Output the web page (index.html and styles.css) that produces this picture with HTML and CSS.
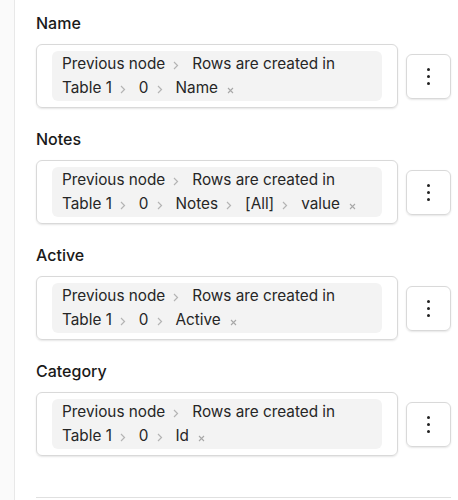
FILE: index.html
```html
<!DOCTYPE html>
<html lang="en">
<head>
<meta charset="UTF-8">
<title>Mapping fields</title>
<link rel="stylesheet" href="styles.css">
</head>
<body>
	<div class="sidebar"></div>
	<div class="main">
		<div class="field">
			<div class="label">Name</div>
			<div class="row">
				<div class="input">
					<div class="chip">Previous node<svg class="sep" width="6" height="9" viewBox="0 0 6 9"><path d="M1 1l3.5 3.5L1 8" fill="none" stroke="#b4b4b4" stroke-width="1.2"/></svg>Rows are created in Table 1<svg class="sep" width="6" height="9" viewBox="0 0 6 9"><path d="M1 1l3.5 3.5L1 8" fill="none" stroke="#b4b4b4" stroke-width="1.2"/></svg>0<svg class="sep" width="6" height="9" viewBox="0 0 6 9"><path d="M1 1l3.5 3.5L1 8" fill="none" stroke="#b4b4b4" stroke-width="1.2"/></svg>Name<svg class="del" width="7" height="7" viewBox="0 0 7 7"><path d="M1 1l5 5M6 1L1 6" stroke="#a8a8a8" stroke-width="1.1"/></svg></div>
				</div>
				<div class="more"><span></span><span></span><span></span></div>
			</div>
		</div>
		<div class="field">
			<div class="label">Notes</div>
			<div class="row">
				<div class="input">
					<div class="chip">Previous node<svg class="sep" width="6" height="9" viewBox="0 0 6 9"><path d="M1 1l3.5 3.5L1 8" fill="none" stroke="#b4b4b4" stroke-width="1.2"/></svg>Rows are created in Table 1<svg class="sep" width="6" height="9" viewBox="0 0 6 9"><path d="M1 1l3.5 3.5L1 8" fill="none" stroke="#b4b4b4" stroke-width="1.2"/></svg>0<svg class="sep" width="6" height="9" viewBox="0 0 6 9"><path d="M1 1l3.5 3.5L1 8" fill="none" stroke="#b4b4b4" stroke-width="1.2"/></svg>Notes<svg class="sep" width="6" height="9" viewBox="0 0 6 9"><path d="M1 1l3.5 3.5L1 8" fill="none" stroke="#b4b4b4" stroke-width="1.2"/></svg>[All]<svg class="sep" width="6" height="9" viewBox="0 0 6 9"><path d="M1 1l3.5 3.5L1 8" fill="none" stroke="#b4b4b4" stroke-width="1.2"/></svg>value<svg class="del" width="7" height="7" viewBox="0 0 7 7"><path d="M1 1l5 5M6 1L1 6" stroke="#a8a8a8" stroke-width="1.1"/></svg></div>
				</div>
				<div class="more"><span></span><span></span><span></span></div>
			</div>
		</div>
		<div class="field">
			<div class="label">Active</div>
			<div class="row">
				<div class="input">
					<div class="chip">Previous node<svg class="sep" width="6" height="9" viewBox="0 0 6 9"><path d="M1 1l3.5 3.5L1 8" fill="none" stroke="#b4b4b4" stroke-width="1.2"/></svg>Rows are created in Table 1<svg class="sep" width="6" height="9" viewBox="0 0 6 9"><path d="M1 1l3.5 3.5L1 8" fill="none" stroke="#b4b4b4" stroke-width="1.2"/></svg>0<svg class="sep" width="6" height="9" viewBox="0 0 6 9"><path d="M1 1l3.5 3.5L1 8" fill="none" stroke="#b4b4b4" stroke-width="1.2"/></svg>Active<svg class="del" width="7" height="7" viewBox="0 0 7 7"><path d="M1 1l5 5M6 1L1 6" stroke="#a8a8a8" stroke-width="1.1"/></svg></div>
				</div>
				<div class="more"><span></span><span></span><span></span></div>
			</div>
		</div>
		<div class="field">
			<div class="label">Category</div>
			<div class="row">
				<div class="input">
					<div class="chip">Previous node<svg class="sep" width="6" height="9" viewBox="0 0 6 9"><path d="M1 1l3.5 3.5L1 8" fill="none" stroke="#b4b4b4" stroke-width="1.2"/></svg>Rows are created in Table 1<svg class="sep" width="6" height="9" viewBox="0 0 6 9"><path d="M1 1l3.5 3.5L1 8" fill="none" stroke="#b4b4b4" stroke-width="1.2"/></svg>0<svg class="sep" width="6" height="9" viewBox="0 0 6 9"><path d="M1 1l3.5 3.5L1 8" fill="none" stroke="#b4b4b4" stroke-width="1.2"/></svg>Id<svg class="del" width="7" height="7" viewBox="0 0 7 7"><path d="M1 1l5 5M6 1L1 6" stroke="#a8a8a8" stroke-width="1.1"/></svg></div>
				</div>
				<div class="more"><span></span><span></span><span></span></div>
			</div>
		</div>
		<div class="divider"></div>
	</div>
</body>
</html>
```

FILE: styles.css
```css
*{margin: 0;padding: 0;box-sizing: border-box;}
body{
	display: flex;
	width: 458px;
	height: 500px;
	overflow: hidden;
	font-family: Inter, "Liberation Sans", sans-serif;
	color: #1f1f1f;
	background: #fff;
}
.sidebar{
	width: 15px;
	flex: none;
	background: #fafafa;
	border-right: 1px solid #e8e8e8;
}
.main{
	flex: 1;
	padding: 11px 7px 0 21px;
}
.field{margin-bottom: 19px;}
.label{
	font-size: 16px;
	font-weight: 500;
	line-height: 24px;
	margin-bottom: 9px;
	color: #1a1a1a;
}
.row{
	display: flex;
	align-items: center;
	gap: 8px;
}
.input{
	flex: 1;
	border: 1px solid #d9d9d9;
	border-radius: 6px;
	padding: 6px 15px;
	box-shadow: 0 1px 2px rgba(0,0,0,0.1);
}
.chip{
	background: #f3f3f3;
	border-radius: 6px;
	padding: 1px 10px;
	font-size: 15.3px;
	line-height: 24px;
	color: #262626;
}
.chip .sep{
	margin: 0 13px 0 8px;
	vertical-align: -1px;
}
.chip .del{
	margin-left: 9px;
	vertical-align: -1px;
}
.more{
	width: 45px;
	height: 45px;
	flex: none;
	border: 1px solid #d9d9d9;
	border-radius: 6px;
	box-shadow: 0 1px 2px rgba(0,0,0,0.1);
	display: flex;
	flex-direction: column;
	align-items: center;
	justify-content: center;
	gap: 4px;
}
.more span{
	width: 3px;
	height: 3px;
	border-radius: 50%;
	background: #222;
}
.divider{
	margin-top: 41px;
	border-top: 1px solid #e0e0e0;
}
```
